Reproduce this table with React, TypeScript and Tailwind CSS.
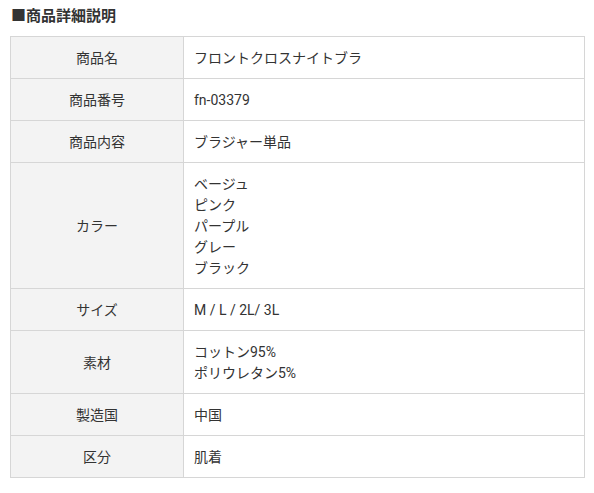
import React from "react";

const rows: [string, string[]][] = [
  ["商品名", ["フロントクロスナイトブラ"]],
  ["商品番号", ["fn-03379"]],
  ["商品内容", ["ブラジャー単品"]],
  ["カラー", ["ベージュ", "ピンク", "パープル", "グレー", "ブラック"]],
  ["サイズ", ["M / L / 2L/ 3L"]],
  ["素材", ["コットン95%", "ポリウレタン5%"]],
  ["製造国", ["中国"]],
  ["区分", ["肌着"]],
];

export default function App() {
  return (
    <div
      className="bg-white w-[594px] h-[493px] text-[#333] pl-[10px] pt-[5px]"
      style={{ fontFamily: 'Roboto, "Noto Sans CJK JP", sans-serif' }}
    >
      <h2 className="text-[15px] font-bold leading-[22px] h-[31px] pl-[1px]">■商品詳細説明</h2>
      <table className="border-collapse w-[575px] text-[14px] leading-[21px]">
        <tbody>
          {rows.map(([k, v]) => (
            <tr key={k}>
              <th className="w-[173px] bg-[#f3f3f3] border border-[#d6d6d6] font-normal text-center pt-[11px] pb-[9px]">
                {k}
              </th>
              <td className="border border-[#d6d6d6] pt-[11px] pb-[9px] pl-[10px] text-left">
                {v.map((l) => (
                  <div key={l}>{l}</div>
                ))}
              </td>
            </tr>
          ))}
        </tbody>
      </table>
    </div>
  );
}
